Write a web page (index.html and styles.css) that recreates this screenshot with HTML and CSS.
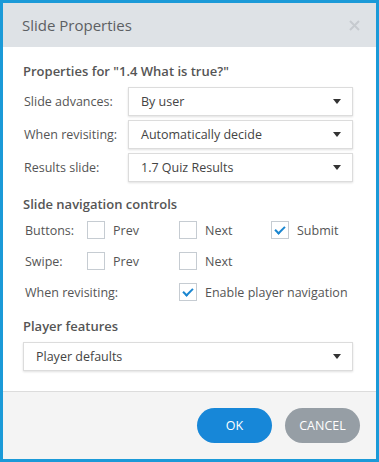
FILE: index.html
```html
<!DOCTYPE html>
<html lang="en">

<head>
  <title>Slide Properties</title>
  <meta charset="UTF-8">
  <meta name="viewport" content="width=device-width, initial-scale=1.0">
  <link rel="stylesheet" href="styles.css">
</head>

<body>

<div class="dialog">
  <div class="dialog-header">
    <span class="dialog-title">Slide Properties</span>
    <svg class="close" width="11" height="11" viewBox="0 0 11 11">
      <path d="M1 1 L10 10 M10 1 L1 10" stroke="#c6cacf" stroke-width="2" fill="none"/>
    </svg>
  </div>

  <div class="dialog-body">
    <div class="section-title">Properties for "1.4 What is true?"</div>

    <div class="form-row">
      <label class="form-label">Slide advances:</label>
      <div class="dropdown">By user<span class="caret"></span></div>
    </div>
    <div class="form-row">
      <label class="form-label">When revisiting:</label>
      <div class="dropdown">Automatically decide<span class="caret"></span></div>
    </div>
    <div class="form-row">
      <label class="form-label">Results slide:</label>
      <div class="dropdown">1.7 Quiz Results<span class="caret"></span></div>
    </div>

    <div class="section-title nav-title">Slide navigation controls</div>

    <div class="nav-grid">
      <span class="nav-label">Buttons:</span>
      <span class="check"><span class="box"></span>Prev</span>
      <span class="check"><span class="box"></span>Next</span>
      <span class="check"><span class="box checked"></span>Submit</span>

      <span class="nav-label">Swipe:</span>
      <span class="check"><span class="box"></span>Prev</span>
      <span class="check"><span class="box"></span>Next</span>
      <span></span>

      <span class="nav-label wide">When revisiting:</span>
      <span class="check wide"><span class="box checked"></span>Enable player navigation</span>
    </div>

    <div class="section-title player-title">Player features</div>
    <div class="dropdown">Player defaults<span class="caret"></span></div>
  </div>

  <div class="dialog-footer">
    <button class="btn btn-ok">OK</button>
    <button class="btn btn-cancel">CANCEL</button>
  </div>
</div>

</body>

</html>
```

FILE: styles.css
```css
body {
  margin: 0;
  font-family: "Open Sans", "Noto Sans", sans-serif;
  color: #555;
}

.dialog {
  width: 379px;
  height: 462px;
  box-sizing: border-box;
  border: 3px solid #1b9ad8;
  display: flex;
  flex-direction: column;
  background: #fff;
}

.dialog-header {
  height: 44px;
  background: #dee2e6;
  display: flex;
  align-items: center;
  justify-content: space-between;
  padding: 0 16px 0 19px;
}

.dialog-title {
  font-size: 15px;
  color: #5c5f63;
}

.dialog-body {
  flex: 1;
  padding: 15px 23px 0 20px;
}

.section-title {
  font-size: 13px;
  font-weight: 600;
  color: #555;
  margin-bottom: 7px;
}

.form-row {
  display: flex;
  align-items: center;
  margin-bottom: 4px;
}

.form-label {
  width: 104px;
  flex: none;
  font-size: 12.5px;
  padding-left: 1px;
}

.dropdown {
  flex: 1;
  height: 27px;
  border: 1px solid #dcdcdc;
  box-shadow: 0 1px 2px rgba(0, 0, 0, 0.12);
  display: flex;
  align-items: center;
  justify-content: space-between;
  padding: 0 11px 0 12px;
  font-size: 12.5px;
  color: #444;
}

.caret {
  width: 0;
  height: 0;
  border-left: 4px solid transparent;
  border-right: 4px solid transparent;
  border-top: 5px solid #333;
}

.nav-title {
  margin-top: 13px;
  margin-bottom: 8px;
}

.nav-grid {
  display: grid;
  grid-template-columns: 64px 92px 92px auto;
  row-gap: 13px;
  font-size: 12.5px;
  align-items: center;
}

.nav-label {
  padding-left: 2px;
}

.nav-label.wide,
.check.wide {
  grid-column: span 2;
}

.check {
  display: flex;
  align-items: center;
  gap: 8px;
}

.box {
  width: 16px;
  height: 16px;
  border: 1px solid #c6ccd2;
  position: relative;
  flex: none;
}

.box.checked::after {
  content: "";
  position: absolute;
  left: 5px;
  top: 2px;
  width: 4px;
  height: 8px;
  border-right: 2px solid #1a86d0;
  border-bottom: 2px solid #1a86d0;
  transform: rotate(45deg);
}

.player-title {
  margin-top: 16px;
  margin-bottom: 7px;
}

.dialog-footer {
  height: 67px;
  border-top: 1px solid #dcdcdc;
  background: #f4f4f4;
  display: flex;
  align-items: center;
  justify-content: flex-end;
  gap: 13px;
  padding-right: 16px;
}

.btn {
  width: 75px;
  height: 35px;
  border: none;
  border-radius: 18px;
  color: #fff;
  font-family: inherit;
  font-size: 12.5px;
}

.btn-ok {
  background: #1787d8;
}

.btn-cancel {
  background: #969ea5;
}
```
